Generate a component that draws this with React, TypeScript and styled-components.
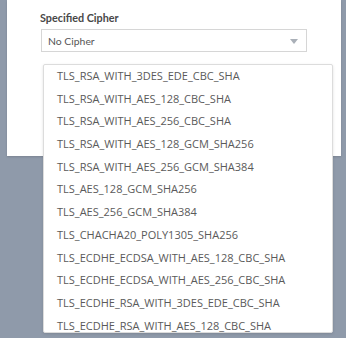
import React from "react";
import styled, { createGlobalStyle } from "styled-components";

const Global = createGlobalStyle`
  html, body { margin: 0; padding: 0; }
  body {
    background: #8f9aaa;
    font-family: "Open Sans", "Liberation Sans", sans-serif;
    width: 346px;
    height: 338px;
    overflow: hidden;
  }
`;

const Stage = styled.div`
  position: relative;
  width: 346px;
  height: 338px;
  padding: 0 5px 0 7px;
  box-sizing: border-box;
`;

const Card = styled.div`
  background: #ffffff;
  height: 156px;
  box-sizing: border-box;
  padding: 10px 0 0 33px;
  box-shadow: 0 1px 2px rgba(0, 0, 0, 0.15);
`;

const Label = styled.div`
  font-family: Lato, "Open Sans", sans-serif;
  font-size: 10.8px;
  font-weight: 700;
  color: #484848;
  line-height: 15px;
  margin-bottom: 4px;
  padding-left: 0;
`;

const Select = styled.div`
  width: 266px;
  height: 23px;
  margin-left: 1px;
  box-sizing: border-box;
  border: 1px solid #d6d6d6;
  display: flex;
  align-items: center;
  justify-content: space-between;
  padding: 0 8px 0 6px;
  font-family: Lato, "Open Sans", sans-serif;
  font-size: 10.4px;
  color: #555;
`;

const Caret = styled.span`
  width: 0;
  height: 0;
  border-left: 4px solid transparent;
  border-right: 4px solid transparent;
  border-top: 5px solid #aab0b8;
  margin-top: 2px;
`;

const Dropdown = styled.div`
  position: absolute;
  left: 43px;
  top: 64px;
  width: 290px;
  height: 269px;
  box-sizing: border-box;
  background: #fff;
  border: 1px solid #dcdcdc;
  border-radius: 2px;
  box-shadow: 0 1px 3px rgba(0, 0, 0, 0.12);
  overflow: hidden;

  &::before {
    content: "";
    position: absolute;
    left: 3px;
    top: -6px;
    width: 7px;
    height: 7px;
    background: #fff;
    border-left: 1px solid #e6e6e6;
    border-top: 1px solid #e6e6e6;
    transform: rotate(45deg);
  }
`;

const List = styled.ul`
  list-style: none;
  margin: 0;
  padding: 0;
  overflow: hidden;
  height: 100%;
`;

const Item = styled.li`
  height: 22.7px;
  line-height: 22.7px;
  padding-left: 13px;
  font-size: 11px;
  color: #5a5a5a;
  white-space: nowrap;
`;

const ciphers = [
  "TLS_RSA_WITH_3DES_EDE_CBC_SHA",
  "TLS_RSA_WITH_AES_128_CBC_SHA",
  "TLS_RSA_WITH_AES_256_CBC_SHA",
  "TLS_RSA_WITH_AES_128_GCM_SHA256",
  "TLS_RSA_WITH_AES_256_GCM_SHA384",
  "TLS_AES_128_GCM_SHA256",
  "TLS_AES_256_GCM_SHA384",
  "TLS_CHACHA20_POLY1305_SHA256",
  "TLS_ECDHE_ECDSA_WITH_AES_128_CBC_SHA",
  "TLS_ECDHE_ECDSA_WITH_AES_256_CBC_SHA",
  "TLS_ECDHE_RSA_WITH_3DES_EDE_CBC_SHA",
  "TLS_ECDHE_RSA_WITH_AES_128_CBC_SHA",
];

export default function App() {
  return (
    <>
      <Global />
      <Stage>
        <Card>
          <Label>Specified Cipher</Label>
          <Select>
            <span>No Cipher</span>
            <Caret />
          </Select>
        </Card>
        <Dropdown>
          <List>
            {ciphers.map((c) => (
              <Item key={c}>{c}</Item>
            ))}
          </List>
        </Dropdown>
      </Stage>
    </>
  );
}
